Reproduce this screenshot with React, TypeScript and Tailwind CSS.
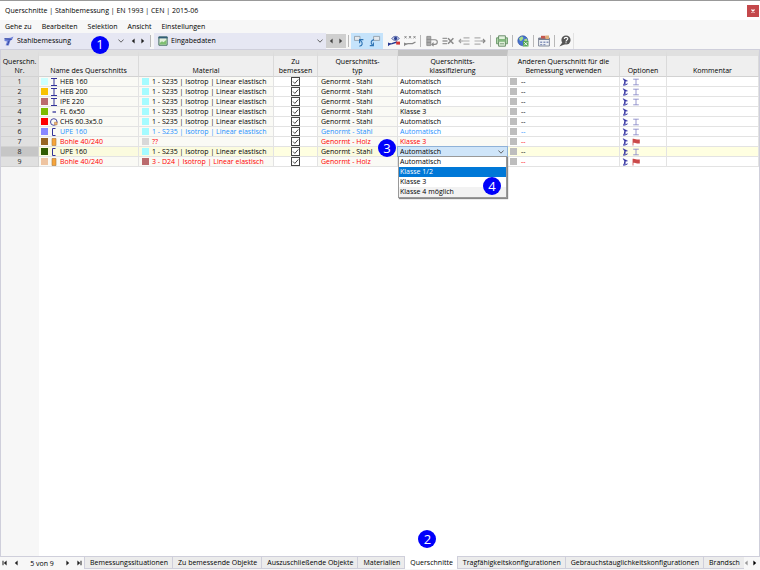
import React from "react";

type Option = "profile" | "flag" | "none";
type Shape = "i" | "u" | "flat" | "pipe" | "wood";

interface Section {
  id: number;
  color: string;
  shape: Shape;
  name: string;
  materialColor: string;
  material: string;
  type: string;
  classification: string;
  readonlyClass: boolean;
  text: string;
  option: Option;
}

const STEEL = "1 - S235 | Isotrop | Linear elastisch";
const CYAN = "bg-[#a5fbff]";
const DARK = "text-black";
const BLUE = "text-[#1e90ff]";
const RED = "text-[#ff0000]";

const sections: Section[] = [
  { id: 1, color: "bg-[#ccffff]", shape: "i", name: "HEB 160", materialColor: CYAN, material: STEEL, type: "Genormt - Stahl", classification: "Automatisch", readonlyClass: false, text: DARK, option: "profile" },
  { id: 2, color: "bg-[#f8c200]", shape: "i", name: "HEB 200", materialColor: CYAN, material: STEEL, type: "Genormt - Stahl", classification: "Automatisch", readonlyClass: false, text: DARK, option: "profile" },
  { id: 3, color: "bg-[#bb6b6d]", shape: "i", name: "IPE 220", materialColor: CYAN, material: STEEL, type: "Genormt - Stahl", classification: "Automatisch", readonlyClass: false, text: DARK, option: "profile" },
  { id: 4, color: "bg-[#7dbb00]", shape: "flat", name: "FL 6x50", materialColor: CYAN, material: STEEL, type: "Genormt - Stahl", classification: "Klasse 3", readonlyClass: true, text: DARK, option: "none" },
  { id: 5, color: "bg-[#ff0000]", shape: "pipe", name: "CHS 60.3x5.0", materialColor: CYAN, material: STEEL, type: "Genormt - Stahl", classification: "Automatisch", readonlyClass: false, text: DARK, option: "profile" },
  { id: 6, color: "bg-[#8888ff]", shape: "u", name: "UPE 160", materialColor: CYAN, material: STEEL, type: "Genormt - Stahl", classification: "Automatisch", readonlyClass: false, text: BLUE, option: "profile" },
  { id: 7, color: "bg-[#966522]", shape: "wood", name: "Bohle 40/240", materialColor: "bg-[#d8d8d8]", material: "??", type: "Genormt - Holz", classification: "Klasse 3", readonlyClass: true, text: RED, option: "flag" },
  { id: 8, color: "bg-[#305c00]", shape: "u", name: "UPE 160", materialColor: CYAN, material: STEEL, type: "Genormt - Stahl", classification: "Automatisch", readonlyClass: false, text: DARK, option: "profile" },
  { id: 9, color: "bg-[#eec4a0]", shape: "wood", name: "Bohle 40/240", materialColor: "bg-[#bb6b6d]", material: "3 - D24 | Isotrop | Linear elastisch", type: "Genormt - Holz", classification: "", readonlyClass: true, text: RED, option: "flag" },
];

const columns = [
  "Querschn.\nNr.",
  "Name des Querschnitts",
  "Material",
  "Zu\nbemessen",
  "Querschnitts-\ntyp",
  "Querschnitts-\nklassifizierung",
  "Anderen Querschnitt für die\nBemessung verwenden",
  "Optionen",
  "Kommentar",
];

const tabs = [
  "Bemessungssituationen",
  "Zu bemessende Objekte",
  "Auszuschließende Objekte",
  "Materialien",
  "Querschnitte",
  "Tragfähigkeitskonfigurationen",
  "Gebrauchstauglichkeitskonfigurationen",
  "Brandsch",
];

function Badge({ n, className }: { n: number; className: string }) {
  return (
    <span className={"absolute z-20 flex size-[18px] items-center justify-center rounded-full bg-[#0000fa] text-[13px] leading-none text-white " + className}>
      {n}
    </span>
  );
}

function Chevron({ className }: { className: string }) {
  return (
    <svg viewBox="0 0 6 4" className={"pointer-events-none h-1 w-1.5 " + className} fill="none" stroke="#555" strokeWidth="0.9">
      <path d="M0.4 0.5 3 3.2 5.6 0.5" />
    </svg>
  );
}

function Arrow({ dir, bar, color = "#222" }: { dir: "left" | "right"; bar?: boolean; color?: string }) {
  return (
    <svg viewBox="0 0 6 6" className="size-1.5" fill={color}>
      {dir === "left" ? <path d="M4.6 0.6V5.4L1.8 3Z" /> : <path d="M1.4 0.6V5.4L4.2 3Z" />}
      {bar && (dir === "left" ? <path d="M0.5 0.8h1v4.4h-1z" /> : <path d="M4.5 0.8h1v4.4h-1z" />)}
    </svg>
  );
}

function ShapeIcon({ shape }: { shape: Shape }) {
  return (
    <svg viewBox="0 0 8 8" className="size-2 shrink-0" fill="none" stroke="#34349a" strokeWidth="1">
      {shape === "i" && <path d="M1 0.5h6M1 7.5h6M4 0.5v7" />}
      {shape === "u" && <path d="M5.5 0.5H2.5V7.5h3" />}
      {shape === "flat" && <path d="M2.5 4h3.5" strokeWidth="1.3" />}
      {shape === "pipe" && (
        <>
          <circle cx="3.8" cy="4" r="3.3" strokeWidth="0.9" />
          <path d="M4.5 4.2h2.6v2.6H4.5z" fill="#f0b870" stroke="#b07040" strokeWidth="0.5" />
        </>
      )}
      {shape === "wood" && <path d="M2 0.5h4v7H2z" fill="#f6a43a" stroke="#a8783c" strokeWidth="0.6" />}
    </svg>
  );
}

function SupportIcon() {
  return (
    <svg viewBox="0 0 7 8" className="h-2 w-[7px]" fill="none" stroke="#2f2fa0" strokeWidth="1">
      <path d="M1 0.6 5.6 2.9 2.8 3.4Z" fill="#2f2fa0" strokeWidth="0.4" />
      <path d="M3 3 2 6.8M1 7H3L5.6 5.8M2.4 5H4" />
    </svg>
  );
}

function OptionIcon({ option }: { option: Option }) {
  if (option === "profile")
    return (
      <svg viewBox="0 0 8 8" className="size-2" fill="none" stroke="#8e8ecb" strokeWidth="0.9">
        <path d="M1.2 1.2h5.6M1.2 6.8h5.6M4 1v6" />
      </svg>
    );
  if (option === "flag")
    return (
      <svg viewBox="0 0 8 8" className="size-2">
        <path d="M0.6 0.8C3 0.2 4.4 2 7.8 1.4V5.4C5 6 3.4 4.4 1.4 4.8V7.6H0.6Z" fill="#cb4a4a" />
      </svg>
    );
  return null;
}

function Tool({ label, active, className, children }: { label: string; active?: boolean; className?: string; children: React.ReactNode }) {
  return (
    <button type="button" aria-label={label} className={"flex h-4 w-4 shrink-0 items-center justify-center " + (active ? "bg-[#c5e3fb] " : "") + (className ?? "")}>
      <svg viewBox="0 0 12 12" className="size-3" fill="none">
        {children}
      </svg>
    </button>
  );
}

function Separator({ className = "mx-0.5" }: { className?: string }) {
  return <span className={"h-3 w-px shrink-0 bg-[#b8b8b8] " + className} />;
}

function Toolbar() {
  return (
    <div className="flex h-[17px] items-center">
      <div className="relative flex h-4 w-[150px] items-center bg-[#e6e7f3]">
        <svg viewBox="0 0 10 10" className="ml-1 size-[10px] shrink-0">
          <path d="M0.5 2.5 6.5 1.8 9.5 0.5 8 3.8 6.4 4.6 4.8 9.5 1.6 9.2 3 5.4 0.5 5Z" fill="#6f83da" />
          <path d="M0.5 2.6 7.5 3.4M5.2 4.4 3.4 9.2" stroke="#27378f" strokeWidth="0.8" fill="none" />
        </svg>
        <select aria-label="Modul" className="ml-[3px] min-w-0 flex-1 appearance-none bg-transparent text-[7px] outline-none">
          <option>Stahlbemessung</option>
        </select>
        <Chevron className="mr-1" />
        <button type="button" aria-label="Vorheriges Modul" className="flex w-2.5 justify-center"><Arrow dir="left" /></button>
        <button type="button" aria-label="Nächstes Modul" className="mr-0.5 flex w-2.5 justify-center"><Arrow dir="right" /></button>
        <Badge n={1} className="left-[91px] top-[3px]" />
      </div>
      <Separator className="mr-[3px]" />
      <div className="flex h-4 w-[172px] items-center bg-[#e6e7f3]">
        <svg viewBox="0 0 10 10" className="ml-1 size-[10px] shrink-0">
          <path d="M0.9 1h8.2v8.2H0.9z" fill="#e4f0dc" stroke="#3f6a5c" strokeWidth="1" />
          <path d="M0.5 0.6h9v1.8h-9z" fill="#315e78" />
          <path d="M1.6 8.6V7L4 5.2 5.5 6.2 8.4 3.8V8.6Z" fill="#7fbf70" />
        </svg>
        <select aria-label="Tabelle" className="ml-[3px] min-w-0 flex-1 appearance-none bg-transparent text-[7px] outline-none">
          <option>Eingabedaten</option>
        </select>
        <Chevron className="mr-[3px]" />
      </div>
      <button type="button" aria-label="Vorherige Tabelle" className="flex h-3.5 w-[10px] items-center justify-center bg-[#cfcfcf]"><Arrow dir="left" color="#444" /></button>
      <button type="button" aria-label="Nächste Tabelle" className="flex h-3.5 w-[10px] items-center justify-center bg-[#cfcfcf]"><Arrow dir="right" color="#444" /></button>
      <Separator className="mx-[2px]" />
      <Tool label="Auswahl übernehmen" active>
        <path d="M1.5 1.4h5.5v4H1.5z" fill="#e4e9ee" stroke="#8b97a1" strokeWidth="0.8" />
        <path d="M6.4 11.2C9.6 10.6 10.4 8 7.2 5.2M6.6 8.2V4.6H10.4" stroke="#2c72b3" strokeWidth="1.1" />
      </Tool>
      <Tool label="Auswahl anzeigen" active>
        <path d="M4.6 1.4h6v4h-6z" fill="#e4e9ee" stroke="#8b97a1" strokeWidth="0.8" />
        <path d="M5 4.6C1.6 5.2 1.4 8 3.6 10.4M0.8 10.6H4.4V7.4" stroke="#2c72b3" strokeWidth="1.1" />
      </Tool>
      <Tool label="Ergebnisse anzeigen" className="ml-[3px]">
        <path d="M0 9.4 4 8.6 9 7" stroke="#24358f" strokeWidth="1.4" />
        <path d="M0 7.4v3.8l3-2.4Z" fill="#24358f" />
        <path d="M8.2 6.6h3.8v3H8.2z" fill="#d23535" />
        <path d="M3.8 3.6C5.5 0.6 9.5 0.6 11.2 3.6 9.5 6 5.5 6 3.8 3.6Z" fill="#d4dbf0" stroke="#2b3e91" strokeWidth="0.8" />
        <circle cx="7.6" cy="3.4" r="1.6" fill="#2b3e91" />
      </Tool>
      <Tool label="Werte anzeigen">
        <path d="M0.5 1 2.5 3.4M2.5 1 0.5 3.4M5 1l2 2.4M7 1 5 3.4M9.5 1l2 2.4M11.5 1l-2 2.4" stroke="#777" strokeWidth="0.8" />
        <path d="M0.5 9.6 4 8.6H8.5L11.5 7" stroke="#888" strokeWidth="1.4" />
        <path d="M0 7.4v3.8l3-2.4Z" fill="#888" />
      </Tool>
      <Separator />
      <Tool label="Zeile einfügen" className="ml-px">
        <path d="M0.8 1.4h4v9.2h-4zM0.8 4.4h4M0.8 7.4h4" fill="#aaa" stroke="#888" strokeWidth="0.8" />
        <path d="M5 4.8h4a2.3 2.3 0 0 1 0 4.6H6M7.6 7.6 5.8 9.4l1.8 1.8" stroke="#8a8a8a" strokeWidth="1.1" />
      </Tool>
      <Tool label="Zeile löschen">
        <path d="M0.5 3.4h4.6M0.5 6h5M0.5 8.6h4.6" stroke="#999" strokeWidth="1.4" />
        <path d="M6 3.2 11.4 8.8M11.4 3.2 6 8.8" stroke="#888" strokeWidth="1.5" />
      </Tool>
      <Tool label="Spalte einfügen">
        <path d="M5.5 2.8h6M5.5 6h6M5.5 9.2h6" stroke="#b0b0b0" strokeWidth="1.2" />
        <path d="M5.5 6H1M3 4 1 6 3 8" stroke="#a0a0a0" strokeWidth="1.1" />
      </Tool>
      <Tool label="Spalte löschen">
        <path d="M0.5 2.8h6M0.5 6h6M0.5 9.2h6" stroke="#b0b0b0" strokeWidth="1.2" />
        <path d="M6.5 6h4.5M9 4 11 6 9 8" stroke="#888" strokeWidth="1.1" />
      </Tool>
      <Separator />
      <Tool label="Nach Excel exportieren" className="ml-px">
        <path d="M0.6 2.8h10.8v6H0.6z" fill="#b9dbb2" stroke="#5f9160" strokeWidth="0.9" />
        <path d="M2.6 0.8h6.8v10.4H2.6z" fill="#e2f1dd" stroke="#5f8560" strokeWidth="0.9" />
        <path d="M2.6 4h6.8v2.8H2.6z" fill="#84bb80" />
        <path d="M4 8.8h4" stroke="#5f8560" strokeWidth="0.8" />
      </Tool>
      <Separator />
      <Tool label="Weltkarte">
        <circle cx="5.8" cy="5.8" r="5" fill="#4672d2" stroke="#294a94" strokeWidth="0.6" />
        <path d="M2 3.2 5 1.2 6.5 3 5 5.5 3 6ZM7 4.5 10 3.4 10.4 6 8 7.6Z" fill="#a7dc86" />
        <path d="M6 6h5.5v5.5H6z" fill="#58a858" />
        <path d="M7.2 7.2 10.3 10.3M10.3 7.2 7.2 10.3" stroke="#fff" strokeWidth="0.9" />
      </Tool>
      <Separator />
      <Tool label="Einstellungen der Tabelle">
        <path d="M0.6 3h10.8v8H0.6z" fill="#edf0f5" stroke="#777f91" strokeWidth="0.9" />
        <path d="M0.6 3h10.8v2H0.6z" fill="#777f91" />
        <path d="M2.2 6.5h2v1.5h-2zM2.2 9h2v1.2h-2zM5.4 6.5h2v1.5h-2zM5.4 9h2v1.2h-2zM8.5 6.5h2v1.5h-2z" fill="#8794bb" />
        <path d="M3 0.8h4.5v2.7H3z" fill="#c6574d" />
        <path d="M7.5 0.5h3.5v3.5H7.5z" fill="#e0ae78" />
      </Tool>
      <Separator />
      <Tool label="Hilfe">
        <circle cx="7" cy="5" r="4.6" fill="#555" />
        <path d="M3.6 7 0.4 11.6 6 9.2Z" fill="#555" />
        <path d="M5.2 4C5.4 1.8 8.8 1.9 8.8 3.8 8.8 5 7 5 7 6.4M7 7.3v1" stroke="#fff" strokeWidth="1.1" />
      </Tool>
      <span className="h-4 w-px bg-[#e2e2e2]" />
    </div>
  );
}

function ClassEditor() {
  return (
    <div className="relative">
      <select aria-label="Querschnittsklassifizierung" className="block h-[9px] w-full appearance-none bg-[#cfe5f9] pl-0.5 text-[7px] leading-[9px] outline outline-[#8fb2d8]">
        <option>Automatisch</option>
      </select>
      <Chevron className="absolute right-[3px] top-[3px]" />
      <ul role="listbox" className="absolute left-0 top-[9px] z-10 w-full border border-[#999] bg-white leading-[10px] shadow-[1px_1px_1px_#888]">
        <li role="option" aria-selected="false" className="pl-px">Automatisch</li>
        <li role="option" aria-selected="true" className="bg-[#0078d7] pl-px text-white">Klasse 1/2</li>
        <li role="option" aria-selected="false" className="pl-px">Klasse 3</li>
        <li role="option" aria-selected="false" className="bg-[#f2f2f2] pl-px">Klasse 4 möglich</li>
      </ul>
      <Badge n={3} className="-left-5 -top-2" />
      <Badge n={4} className="left-[85px] top-[30px]" />
    </div>
  );
}

function SectionRow({ s }: { s: Section }) {
  const selected = s.id === 8;
  const locked = selected ? "bg-[#fbfbde]" : "bg-[#fafaf5]";
  const open = selected ? "bg-[#ffffe1]" : "bg-white";
  const cell = "h-[10px] border-b border-r border-[#e3e3e3] p-0 ";
  return (
    <tr className={s.text}>
      <th scope="row" className={"h-[10px] border-b border-r border-[#d2d2d2] p-0 font-normal text-[#222] " + (selected ? "bg-[#c6c6c6]" : "bg-[#e0e0e0]")}>{s.id}</th>
      <td className={cell + locked}>
        <div className="flex items-center pl-0.5">
          <span className={"mr-[2px] size-[7px] shrink-0 " + s.color} />
          <ShapeIcon shape={s.shape} />
          <span className="ml-[2px]">{s.name}</span>
        </div>
      </td>
      <td className={cell + locked}>
        <div className="flex items-center pl-[3px]">
          <span className={"mr-[3px] size-[7px] shrink-0 " + s.materialColor} />
          <span>{s.material}</span>
        </div>
      </td>
      <td className={cell + open}>
        <label className="relative mx-auto flex size-[9px] items-center justify-center">
          <input type="checkbox" defaultChecked aria-label={"Querschnitt " + s.id + " bemessen"} className="peer size-[9px] appearance-none border border-[#444] bg-white" />
          <svg viewBox="0 0 9 9" className="pointer-events-none absolute inset-0 hidden size-[9px] peer-checked:block" fill="none" stroke="#333" strokeWidth="0.9">
            <path d="M2 4.5 3.8 6.4 7.3 2.5" />
          </svg>
        </label>
      </td>
      <td className={cell + locked + " pl-[3px]"}>{s.type}</td>
      <td className={cell + (s.readonlyClass ? locked : open) + (selected ? "" : " pl-[2px]")}>
        {selected ? <ClassEditor /> : s.classification}
      </td>
      <td className={cell + open}>
        <div className="flex items-center pl-[2px]">
          <span className="mr-[4px] size-[7px] bg-[#bdbdbd]" />
          <span>--</span>
        </div>
      </td>
      <td className={cell + open}>
        <div className="flex items-center gap-[3px] pl-[2px]">
          <SupportIcon />
          <OptionIcon option={s.option} />
        </div>
      </td>
      <td className={cell + open} />
    </tr>
  );
}

export default function App() {
  return (
    <div className="flex h-screen flex-col overflow-hidden border-t border-[#999] bg-[#f7f7f7] font-['Open_Sans','Noto_Sans',sans-serif] text-[7px] leading-[9px] text-black">
      <header className="flex h-[19px] shrink-0 items-center justify-between bg-white pl-[5px]">
        <h1>Querschnitte | Stahlbemessung | EN 1993 | CEN | 2015-06</h1>
        <button type="button" aria-label="Schließen" className="mr-px flex h-3 w-3 items-center justify-center bg-[#c4484b]">
          <svg viewBox="0 0 6 6" className="size-1.5" stroke="#fff" strokeWidth="1.2"><path d="M1.5 1.5 4.5 4.5M4.5 1.5 1.5 4.5" /></svg>
        </button>
      </header>
      <nav className="flex h-3 shrink-0 items-center gap-[10px] pl-[5px]">
        {["Gehe zu", "Bearbeiten", "Selektion", "Ansicht", "Einstellungen"].map((m) => (
          <button type="button" key={m}>{m}</button>
        ))}
      </nav>
      <Toolbar />
      <main className="flex min-h-0 flex-1 flex-col border-x border-t border-[#cfcfdb] bg-white">
        <table className="w-full table-fixed border-separate border-spacing-0 whitespace-nowrap">
          <colgroup>
            <col className="w-[38px]" />
            <col className="w-[100px]" />
            <col className="w-[135px]" />
            <col className="w-[44px]" />
            <col className="w-[80px]" />
            <col className="w-[110px]" />
            <col className="w-[112px]" />
            <col className="w-[47px]" />
            <col />
          </colgroup>
          <thead>
            <tr>
              {columns.map((c, i) => (
                <th
                  key={c}
                  scope="col"
                  className={
                    "h-[27px] whitespace-pre-line border-b border-r border-t-[6px] border-b-[#d2d2d2] border-r-[#dadada] p-0 pb-px align-bottom font-normal leading-[9px] " +
                    (i === 0 ? "bg-[#e0e0e0] " : "bg-[#efefef] ") +
                    (i === 5 ? "border-t-[#c2c2c2]" : "border-t-[#e0e0e0]")
                  }
                >
                  {c}
                </th>
              ))}
            </tr>
          </thead>
          <tbody>
            {sections.map((s) => (
              <SectionRow key={s.id} s={s} />
            ))}
          </tbody>
        </table>
        <div className="w-[38px] flex-1 bg-[#f7f7f7]" />
      </main>
      <footer className="flex h-[14px] shrink-0 border-t border-[#cfcfdb] pb-px">
        <div className="flex w-[84px] shrink-0 items-center justify-between pl-[2px] pr-[2px]">
          <button type="button" aria-label="Erste"><Arrow dir="left" bar /></button>
          <button type="button" aria-label="Vorherige"><Arrow dir="left" /></button>
          <span className="px-1.5">5 von 9</span>
          <button type="button" aria-label="Nächste"><Arrow dir="right" /></button>
          <button type="button" aria-label="Letzte"><Arrow dir="right" bar /></button>
        </div>
        <div className="flex min-w-0 flex-1">
          <div role="tablist" className="flex min-w-0 flex-1">
            {tabs.map((t, i) => {
              const active = t === "Querschnitte";
              return (
                <button
                  type="button"
                  role="tab"
                  aria-selected={active}
                  key={t}
                  className={
                    "relative whitespace-nowrap border-l border-[#cfcfdb] pl-[5px] pr-1 text-left " +
                    (i === tabs.length - 1 ? "flex-1 " : "shrink-0 ") +
                    (active ? "-mt-px bg-white" : "border-b bg-[#ececec]")
                  }
                >
                  {t}
                  {active && <Badge n={2} className="-top-[26px] left-[13px]" />}
                </button>
              );
            })}
          </div>
          <button type="button" aria-label="Tabs nach links" className="flex w-2 items-center justify-center"><Arrow dir="left" color="#999" /></button>
          <button type="button" aria-label="Tabs nach rechts" className="flex w-2.5 items-center justify-center"><Arrow dir="right" color="#000" /></button>
        </div>
      </footer>
    </div>
  );
}
